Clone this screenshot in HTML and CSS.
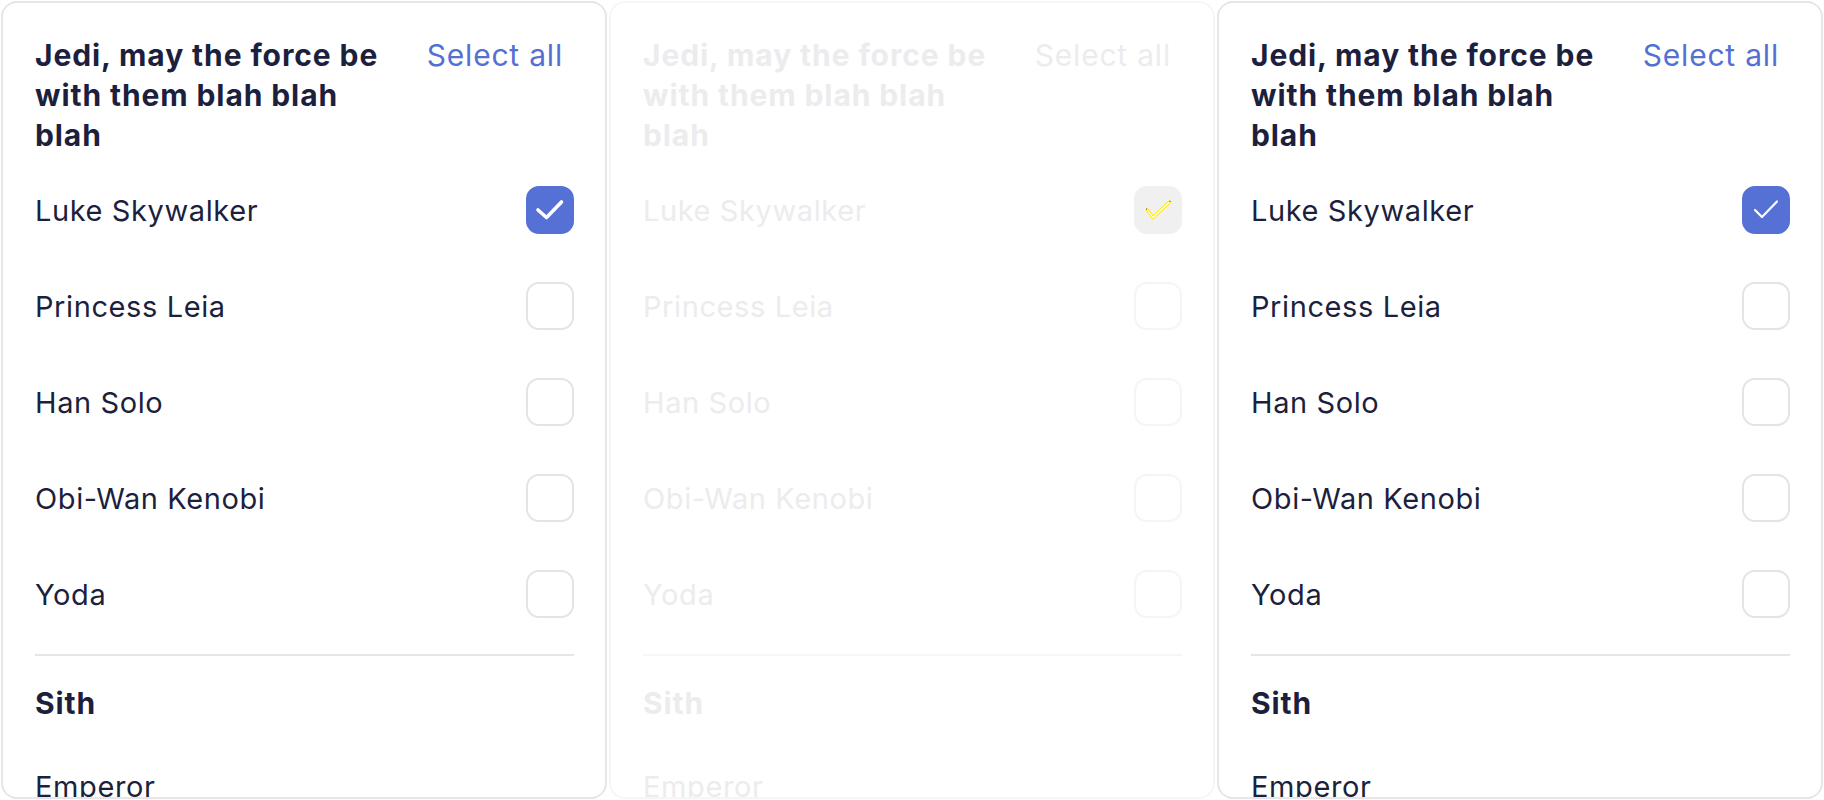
FILE: index.html
```html
<!DOCTYPE html>
<html lang="en">
<head>
<meta charset="utf-8">
<title>Checkbox groups</title>
<link rel="stylesheet" href="styles.css">
</head>
<body>
<div class="grid">
  <section class="panel">
    <div class="head">
      <h2 class="title">Jedi, may the force be with them blah blah blah</h2>
      <button class="select-all">Select all</button>
    </div>
    <ul class="list">
      <li class="item"><span>Luke Skywalker</span><span class="box checked"><svg viewBox="0 0 48 48"><polyline points="12,24 20.5,31.5 35.5,16" class="mark-thick"/></svg></span></li>
      <li class="item"><span>Princess Leia</span><span class="box"></span></li>
      <li class="item"><span>Han Solo</span><span class="box"></span></li>
      <li class="item"><span>Obi-Wan Kenobi</span><span class="box"></span></li>
      <li class="item"><span>Yoda</span><span class="box"></span></li>
    </ul>
    <hr class="divider">
    <h3 class="group">Sith</h3>
    <ul class="list list-sith">
      <li class="item item-cut"><span>Emperor</span></li>
    </ul>
  </section>

  <section class="panel disabled">
    <div class="head">
      <h2 class="title">Jedi, may the force be with them blah blah blah</h2>
      <button class="select-all">Select all</button>
    </div>
    <ul class="list">
      <li class="item"><span>Luke Skywalker</span><span class="box checked"><svg viewBox="0 0 48 48"><polyline points="13,23.5 19,31.5 36,15.5" class="mark-outer"/><polyline points="13,23.5 19,31.5 36,15.5" class="mark-inner"/><rect x="12" y="22.5" width="1.2" height="1.2" class="mark-dot"/><rect x="35.4" y="14.8" width="1.2" height="1.2" class="mark-dot"/></svg></span></li>
      <li class="item"><span>Princess Leia</span><span class="box"></span></li>
      <li class="item"><span>Han Solo</span><span class="box"></span></li>
      <li class="item"><span>Obi-Wan Kenobi</span><span class="box"></span></li>
      <li class="item"><span>Yoda</span><span class="box"></span></li>
    </ul>
    <hr class="divider">
    <h3 class="group">Sith</h3>
    <ul class="list list-sith">
      <li class="item item-cut"><span>Emperor</span></li>
    </ul>
  </section>

  <section class="panel">
    <div class="head">
      <h2 class="title">Jedi, may the force be with them blah blah blah</h2>
      <button class="select-all">Select all</button>
    </div>
    <ul class="list">
      <li class="item"><span>Luke Skywalker</span><span class="box checked"><svg viewBox="0 0 48 48"><polyline points="13,24 20,31 35,15.5" class="mark-thin"/></svg></span></li>
      <li class="item"><span>Princess Leia</span><span class="box"></span></li>
      <li class="item"><span>Han Solo</span><span class="box"></span></li>
      <li class="item"><span>Obi-Wan Kenobi</span><span class="box"></span></li>
      <li class="item"><span>Yoda</span><span class="box"></span></li>
    </ul>
    <hr class="divider">
    <h3 class="group">Sith</h3>
    <ul class="list list-sith">
      <li class="item item-cut"><span>Emperor</span></li>
    </ul>
  </section>
</div>
</body>
</html>
```

FILE: styles.css
```css
* { box-sizing: border-box; }

html, body {
  margin: 0;
  padding: 0;
  background: #ffffff;
  font-family: Inter, "Noto Sans", sans-serif;
  color: #1c1f3d;
}

.grid {
  display: grid;
  grid-template-columns: repeat(3, 608px);
  height: 800px;
  overflow: hidden;
}

.panel {
  margin: 1px 1px 0 1px;
  height: 798px;
  border: 2px solid #e6e6e6;
  border-radius: 16px;
  padding: 32px 31px 32px 32px;
  overflow: hidden;
  background: #fff;
}

.head {
  display: flex;
  justify-content: space-between;
  align-items: flex-start;
  gap: 24px;
}

.title {
  margin: 0;
  max-width: 362px;
  font-size: 30px;
  line-height: 40px;
  font-weight: 700;
  letter-spacing: 0.9px;
}

.select-all {
  border: 0;
  background: none;
  padding: 0 11px 0 0;
  margin: 0;
  font-family: inherit;
  font-size: 30px;
  line-height: 40px;
  font-weight: 400;
  color: #5470d4;
  letter-spacing: 0.8px;
  cursor: pointer;
}

.list {
  list-style: none;
  margin: 7px 0 0 0;
  padding: 0;
}

.item {
  height: 96px;
  display: flex;
  align-items: center;
  justify-content: space-between;
  font-size: 29px;
  letter-spacing: 0.6px;
}

.box {
  width: 48px;
  height: 48px;
  flex: none;
  border: 2px solid #e4e4e6;
  border-radius: 13px;
  display: flex;
}

.box svg {
  width: 48px;
  height: 48px;
  margin: -2px;
}

.box.checked {
  background: #5571d6;
  border-color: #5571d6;
}

.mark-thick {
  fill: none;
  stroke: #ffffff;
  stroke-width: 3.6;
  stroke-linecap: round;
  stroke-linejoin: round;
}

.mark-thin {
  fill: none;
  stroke: #ffffff;
  stroke-width: 2.2;
  stroke-linecap: round;
  stroke-linejoin: round;
}

.divider {
  margin: 12px 0 0 0;
  border: 0;
  height: 2px;
  background: #e6e6e6;
}

.group {
  margin: 27px 0 0 0;
  font-size: 30px;
  line-height: 40px;
  font-weight: 700;
  letter-spacing: 0.9px;
}

.list-sith {
  margin-top: 15px;
}

/* disabled panel */
.panel.disabled {
  border-color: #f6f6f6;
  color: #ececee;
}

.panel.disabled .select-all {
  color: #ececee;
}

.panel.disabled .box {
  border-color: #f5f5f5;
}

.panel.disabled .box.checked {
  background: #f0f0f0;
  border-color: #f0f0f0;
}

.panel.disabled .divider {
  background: #f6f6f6;
}

.mark-outer {
  fill: none;
  stroke: #ffee00;
  stroke-width: 3.2;
}

.mark-inner {
  fill: none;
  stroke: #ffffff;
  stroke-width: 1.2;
}

.mark-dot {
  fill: #e0201a;
}
```
